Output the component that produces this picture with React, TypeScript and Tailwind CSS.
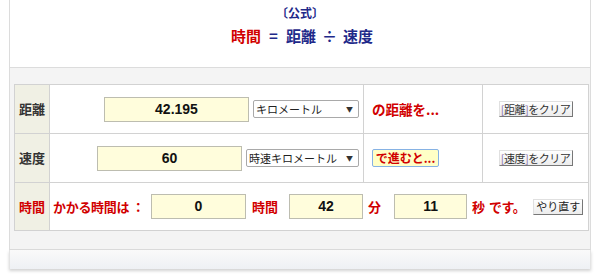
import React from "react";

const jp = { fontFamily: '"Noto Sans CJK JP", "Liberation Sans", sans-serif' };
const num = { fontFamily: '"Liberation Sans", "Noto Sans CJK JP", sans-serif' };

const NumBox: React.FC<{ value: string; className: string }> = ({ value, className }) => (
  <div
    className={`shrink-0 flex items-center justify-center bg-[#fffddc] border border-[#bdbdb0] text-[14px] font-bold text-[#111] ${className}`}
    style={num}
  >
    {value}
  </div>
);

const FakeSelect: React.FC<{ label: string; className: string }> = ({ label, className }) => (
  <div
    className={`shrink-0 flex items-center justify-between bg-white border border-[#a9a9a9] rounded-[2px] pl-[2px] pr-[5px] text-[11px] leading-none text-[#222] whitespace-nowrap ${className}`}
    style={jp}
  >
    <span>{label}</span>
    <span className="text-[7px] text-[#333]">▼</span>
  </div>
);

const ClearButton: React.FC<{ word: string }> = ({ word }) => (
  <button
    className="mx-auto flex items-center justify-center whitespace-nowrap w-[74px] h-[16px] bg-gradient-to-b from-white to-[#ececec] border border-t-[#e0e0e0] border-l-[#e0e0e0] border-r-[#777] border-b-[#777] text-[11px] tracking-[-0.5px] leading-none text-[#333]"
    style={jp}
  >
    <span className="text-[#8a6fa8]">[</span>
    {word}
    <span className="text-[#8a6fa8]">]</span>
    をクリア
  </button>
);

export default function App() {
  return (
    <div className="w-[600px] h-[277px] bg-white overflow-hidden" style={jp}>
      {/* formula */}
      <div className="mx-[9px] h-[67px] bg-white border-x border-[#dcdcdc] flex flex-col items-center pt-[5px]">
        <div className="text-[12px] font-bold text-[#1f2a8a] leading-[16px]">〔公式〕</div>
        <div className="mt-[5px] text-[15px] font-bold leading-[20px] text-[#1f2a8a] pl-[4px]">
          <span className="text-[#d10000]">時間</span>
          <span className="mx-[8px]">=</span>
          距離
          <span className="mx-[6px]">÷</span>
          速度
        </div>
      </div>

      {/* calculator */}
      <div className="mx-[9px] h-[183px] bg-[#f4f4f4] border border-[#dcdcdc] pt-[16px] px-[4px]">
        <table className="w-[575px] border-collapse bg-white text-[13px]">
          <colgroup>
            <col className="w-[35px]" />
            <col className="w-[314px]" />
            <col className="w-[119px]" />
            <col className="w-[106px]" />
          </colgroup>
          <tbody>
            <tr className="h-[49px]">
              <td className="border border-[#d2d2d2] bg-[#f0f0e4] text-center font-bold text-[#333]">距離</td>
              <td className="border border-[#d2d2d2] pr-[4px]">
                <div className="flex items-center justify-end gap-[4px]">
                  <NumBox value="42.195" className="w-[145px] h-[25px]" />
                  <FakeSelect label="キロメートル" className="w-[106px] h-[18px]" />
                </div>
              </td>
              <td className="border border-[#d2d2d2] pl-[8px] text-[13.5px] font-bold text-[#d10000] whitespace-nowrap">の距離を...</td>
              <td className="border border-[#d2d2d2]">
                <ClearButton word="距離" />
              </td>
            </tr>
            <tr className="h-[49px]">
              <td className="border border-[#d2d2d2] bg-[#f0f0e4] text-center font-bold text-[#333]">速度</td>
              <td className="border border-[#d2d2d2] pr-[4px]">
                <div className="flex items-center justify-end gap-[4px]">
                  <NumBox value="60" className="w-[145px] h-[25px]" />
                  <FakeSelect label="時速キロメートル" className="w-[113px] h-[18px]" />
                </div>
              </td>
              <td className="border border-[#d2d2d2] pl-[8px]">
                <button className="flex items-center justify-center whitespace-nowrap w-[67px] h-[18px] bg-[#ffffc6] border border-[#86b2e4] rounded-[2px] text-[12px] font-bold leading-none text-[#d10000]">
                  で進むと...
                </button>
              </td>
              <td className="border border-[#d2d2d2]">
                <ClearButton word="速度" />
              </td>
            </tr>
            <tr className="h-[48px]">
              <td className="border border-[#d2d2d2] bg-[#f0f0e4] text-center font-bold text-[#d10000]">時間</td>
              <td colSpan={3} className="border border-[#d2d2d2] pl-[3px]">
                <div className="flex items-center whitespace-nowrap text-[13px] font-bold text-[#d10000]">
                  <span className="shrink-0 w-[89px] tracking-[-0.3px]">かかる時間は ：</span>
                  <NumBox value="0" className="ml-[9px] w-[95px] h-[25px]" />
                  <span className="ml-[6px]">時間</span>
                  <NumBox value="42" className="ml-[11px] w-[74px] h-[25px]" />
                  <span className="ml-[5px]">分</span>
                  <NumBox value="11" className="ml-[13px] w-[73px] h-[25px]" />
                  <span className="ml-[5px]">秒</span>
                  <span className="ml-[4px] tracking-[-0.5px]">です。</span>
                  <button className="ml-[8px] shrink-0 flex items-center justify-center w-[50px] h-[16px] bg-gradient-to-b from-white to-[#ececec] border border-t-[#e0e0e0] border-l-[#e0e0e0] border-r-[#777] border-b-[#777] text-[11px] font-normal leading-none text-[#222]">
                    やり直す
                  </button>
                </div>
              </td>
            </tr>
          </tbody>
        </table>
      </div>

      {/* footer strip */}
      <div className="mx-[9px] h-[19px] bg-gradient-to-b from-[#fafafa] to-[#eef0f4] border-x border-[#e4e4e4] shadow-[0_2px_3px_rgba(0,0,0,0.18)]" />
    </div>
  );
}
